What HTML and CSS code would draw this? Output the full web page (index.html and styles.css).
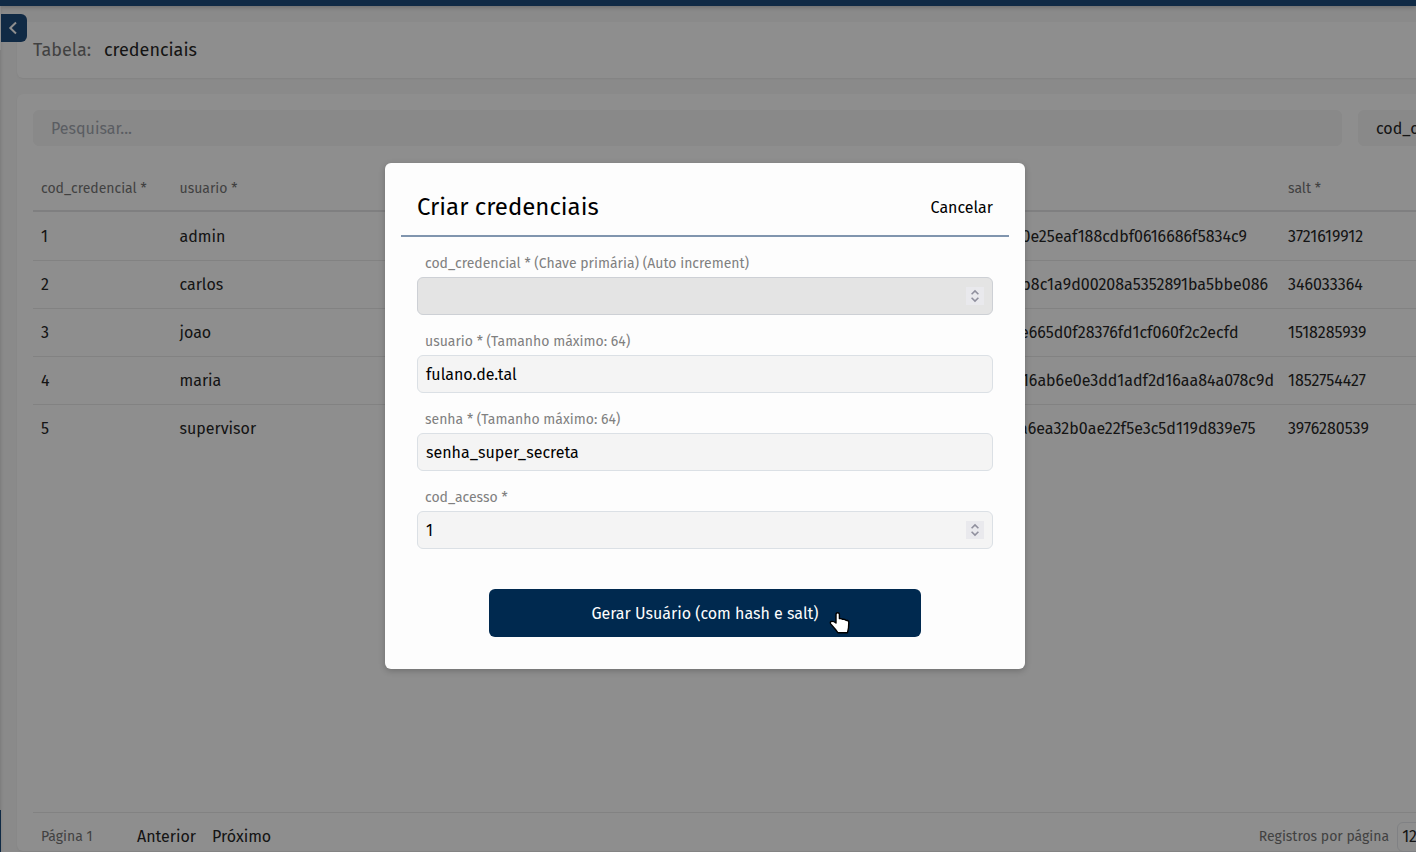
FILE: index.html
```
<!DOCTYPE html>
<html lang="pt-BR">
<head>
<meta charset="utf-8">
<title>Tabela: credenciais</title>
<link rel="stylesheet" href="styles.css">
</head>
<body>
<div class="app">
  <div class="topbar"></div>
  <div class="shell">
    <aside class="sidebar"><div class="sidebar-head"></div><div class="sidebar-body"></div><div class="sidebar-foot"></div></aside>
    <main class="main">
      <header class="card title-card"><span class="muted">Tabela:</span><span>credenciais</span></header>
      <section class="card table-card">
        <div class="filters">
          <input class="search" type="text" placeholder="Pesquisar...">
          <div class="select">cod_credencial</div>
        </div>
        <div class="table">
          <div class="row head"><span>cod_credencial *</span><span>usuario *</span><span></span><span>salt *</span></div>
          <div class="row"><span>1</span><span>admin</span><span class="hash h1">0e25eaf188cdbf0616686f5834c9</span><span>3721619912</span></div>
          <div class="row"><span>2</span><span>carlos</span><span class="hash h2">b8c1a9d00208a5352891ba5bbe086</span><span>346033364</span></div>
          <div class="row"><span>3</span><span>joao</span><span class="hash h3">e665d0f28376fd1cf060f2c2ecfd</span><span>1518285939</span></div>
          <div class="row"><span>4</span><span>maria</span><span class="hash h4">16ab6e0e3dd1adf2d16aa84a078c9d</span><span>1852754427</span></div>
          <div class="row"><span>5</span><span>supervisor</span><span class="hash h5">a6ea32b0ae22f5e3c5d119d839e75</span><span>3976280539</span></div>
        </div>
        <footer class="pager">
          <span class="muted small page">Página 1</span><span class="link">Anterior</span><span class="link">Próximo</span>
          <span class="muted small per-page">Registros por página</span><span class="size">12</span>
        </footer>
      </section>
    </main>
  </div>
  <div class="toggle"><svg width="26" height="28" viewBox="0 0 26 28"><path d="M15 8.500 9.300 14l5.700 5.500" fill="none" stroke="#fdfdfd" stroke-width="2"/></svg></div>
</div>
<div class="overlay">
  <div class="modal">
    <div class="modal-head"><h1>Criar credenciais</h1><span class="cancel">Cancelar</span></div>
    <div class="form">
      <label>cod_credencial * (Chave primária) (Auto increment)</label>
      <div class="field disabled"><span></span><svg class="spin" width="18" height="18" viewBox="0 0 18 18"><path d="M5.6 7.2 9 3.9l3.4 3.3M5.6 10.8 9 14.1l3.4-3.3"/></svg></div>
      <label>usuario * (Tamanho máximo: 64)</label>
      <div class="field"><span>fulano.de.tal</span></div>
      <label>senha * (Tamanho máximo: 64)</label>
      <div class="field"><span>senha_super_secreta</span></div>
      <label>cod_acesso *</label>
      <div class="field"><span>1</span><svg class="spin" width="18" height="18" viewBox="0 0 18 18"><path d="M5.6 7.2 9 3.9l3.4 3.3M5.6 10.8 9 14.1l3.4-3.3"/></svg></div>
    </div>
    <div class="submit">Gerar Usuário (com hash e salt)</div>
  </div>
</div>
<svg class="cursor" width="24" height="24" viewBox="0 0 24 24"><path d="M8 12V3.600c0-2.500 3.400-2.500 3.400 0V7.500l1.800.1 1.500.7 1.700.1 1.500.8 1.700.3c1 .4 1.300 1 1.200 2l-.3 5.300-1 4.900H9.800l-2.300-3.200-4.800-5.600c-.9-1.300-.2-2.500 1.200-2.500 1.600 0 2.900.600 4.100 1.600Z" fill="#fff" stroke="#000" stroke-width="1.400" stroke-linejoin="round"/></svg>
</body>
</html>
```
FILE: styles.css
```
* { box-sizing: border-box; }
body {
  margin: 0;
  overflow: hidden;
  font: 16px/24px "Fira Sans", "Noto Sans", sans-serif;
  color: #262626;
}
.app {
  height: 852px;
  display: flex;
  flex-direction: column;
  background: #f6f6f6;
  overflow: hidden;
}
.topbar {
  height: 6px;
  flex: none;
  background: #1e4b7b;
  box-shadow: 0 1px 5px rgba(0, 0, 0, .25);
  position: relative;
}
.shell { flex: 1; display: flex; min-height: 0; }
.sidebar {
  width: 1px;
  flex: none;
  display: flex;
  flex-direction: column;
  box-shadow: 0 0 3px rgba(0, 0, 0, .2);
}
.sidebar-head { height: 44px; background: #fdfdfd; }
.sidebar-body { flex: 1; background: #e2e2e2; }
.sidebar-foot { height: 42px; background: #1e4b7b; }
.main {
  flex: none;
  width: 1500px;
  padding: 16px 0 1px 16px;
  display: flex;
  flex-direction: column;
  gap: 16px;
}
.card {
  background: #fdfdfd;
  border-radius: 6px;
  box-shadow: 0 1px 2px rgba(0, 0, 0, .06);
}
.title-card {
  height: 56px;
  flex: none;
  padding: 0 16px;
  display: flex;
  align-items: center;
  gap: 13px;
  font-size: 18px;
}
.muted { color: #757575; }
.small { font-size: 14px; }
.table-card {
  flex: 1;
  padding: 16px 16px 0;
  display: flex;
  flex-direction: column;
}
.filters { display: flex; gap: 16px; }
.search, .select {
  flex: none;
  height: 36px;
  border: 1px solid #f4f4f4;
  border-radius: 6px;
  background: #f4f4f4;
  font: inherit;
  padding: 0 17px;
}
.search { width: 1309px; }
.search::placeholder { color: #a1a6af; opacity: 1; }
.select { width: 150px; line-height: 35px; }
.table { margin-top: 18px; flex: 1; }
.row {
  display: grid;
  grid-template-columns: 138.5px 829px 279.5px 1fr;
  height: 48px;
  align-items: center;
  border-bottom: 1px solid #e8e8e8;
}
.row:nth-child(2) { height: 49px; padding-top: 1px; }
.row:last-child { border-bottom: 0; }
.row > span { padding-left: 8px; white-space: nowrap; }
.row.head {
  color: #757575;
  font-size: 14px;
  padding-top: 4px;
  border-bottom: 2px solid #e2e3e5;
}
.hash { display: flex; justify-content: flex-end; }
.row > .h1 { padding-right: 33px; }
.row > .h2 { padding-right: 12px; }
.row > .h3 { padding-right: 41.5px; }
.row > .h4 { padding-right: 6px; }
.row > .h5 { padding-right: 24.5px; }
.pager {
  height: 39px;
  border-top: 1px solid #e8e8e8;
  display: flex;
  align-items: center;
  padding: 9px 0 0 8px;
}
.page { width: 96px; }
.link { margin-right: 16px; }
.per-page { margin-left: 971.5px; }
.size {
  height: 30px;
  width: 80px;
  margin-left: 8px;
  padding-left: 4px;
  line-height: 28px;
  border: 1px solid #e5e7eb;
  border-radius: 6px;
}
.toggle {
  position: absolute;
  left: 1px;
  top: 14px;
  width: 26px;
  height: 28px;
  border-radius: 0 6px 6px 0;
  background: #1e4b7b;
}
.toggle svg, .spin { display: block; }
.overlay {
  position: absolute;
  inset: 0;
  background: rgba(0, 0, 0, .44);
  display: flex;
  padding: 163px 0 0 385px;
}
.modal {
  width: 640px;
  height: 506px;
  padding: 16px;
  border-radius: 6px;
  background: #fdfdfd;
  color: #000;
  box-shadow: 0 2px 6px rgba(0, 0, 0, .22);
}
.modal-head {
  height: 58px;
  padding: 0 16px;
  border-bottom: 2px solid #8095ae;
  display: flex;
  align-items: center;
  justify-content: space-between;
}
h1 { margin: 0; font-size: 24px; line-height: 32px; font-weight: 400; }
.cancel { line-height: 24px; padding-top: 2px; }
.form { padding: 16px 16px 0; }
label {
  display: block;
  height: 24px;
  padding-left: 8px;
  font-size: 14px;
  line-height: 22px;
  color: #808080;
}
.field {
  height: 38px;
  margin-bottom: 16px;
  padding: 0 8px;
  display: flex;
  align-items: center;
  justify-content: space-between;
  border: 1px solid #dbe0e5;
  border-radius: 6px;
  background: #f4f4f4;
}
.field span { padding-top: 2px; }
.field.disabled { background: #e4e4e4; border-color: #cdd0d5; }
.spin {
  background: #e9e9ed;
  fill: none;
  stroke: #8f8f9d;
  stroke-width: 1.6;
}
.submit {
  width: 432px;
  height: 48px;
  margin: 24px auto 0;
  border-radius: 6px;
  background: #00294f;
  color: #fdfdfd;
  text-align: center;
  line-height: 50px;
}
.form + .submit { margin-top: 40px; }
.form .field:last-child { margin-bottom: 0; }
.cursor { position: absolute; left: 828px; top: 611px; }
```
